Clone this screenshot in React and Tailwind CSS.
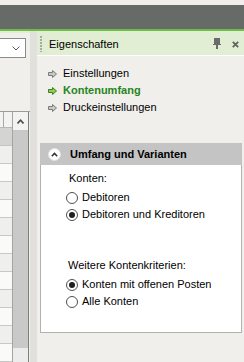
// Eigenschaften-Panel mit Kontenumfang (Screenshot-Nachbau)
function NavArrow({ active }) {
  const fill = active ? '#8fd04f' : '#c8c8c8'
  const stroke = active ? '#3d7d1e' : '#7b7b7b'
  return (
    <svg width="9" height="8" viewBox="0 0 9 8" className="shrink-0">
      <path d="M0.5 2.5H4.5V0.5L8.5 4L4.5 7.5V5.5H0.5Z" fill={fill} stroke={stroke} strokeWidth="1" />
    </svg>
  )
}

function NavItem({ label, active }) {
  return (
    <div className="flex items-center h-[17px] pl-[11px] gap-[6px]">
      <NavArrow active={active} />
      <span className={active ? 'font-bold text-[#27851b]' : 'text-black'}>{label}</span>
    </div>
  )
}

function Radio({ checked, label }) {
  return (
    <div className="flex items-center h-[17px]">
      <span className="w-[12px] h-[12px] rounded-full border border-[#4f4f4f] bg-white grid place-items-center shrink-0">
        {checked && <span className="w-[6px] h-[6px] rounded-full bg-[#1f1f1f]" />}
      </span>
      <span className="ml-[4px]">{label}</span>
    </div>
  )
}

function LeftPanel() {
  const rows = Array.from({ length: 12 }, (_, i) => i + 1)
  return (
    <div className="w-[30px] shrink-0 flex flex-col overflow-hidden">
      <div className="h-[2px] bg-[#e1eed4]" />
      {/* Combobox, links abgeschnitten */}
      <div className="mt-[5px] -ml-px w-[27px] h-[20px] bg-white border border-[#8a8a8a] flex items-center justify-end pr-[5px]">
        <svg width="8" height="5" viewBox="0 0 8 5">
          <path d="M0.5 0.5L4 4L7.5 0.5" fill="none" stroke="#5a5a5a" strokeWidth="1" />
        </svg>
      </div>
      {/* Tabelle mit Scrollbar */}
      <div className="mt-[53px] flex-1 flex border-t border-[#9b9b9b] min-h-0">
        <div className="w-[13px] flex flex-col border-r border-[#a5a5a5]">
          <div className="h-[19px] flex bg-[#f3f3f1] border-b border-[#b8b8b8]">
            <div className="w-[4px] border-r border-[#a8a8a8]" />
            <div className="flex-1" />
          </div>
          <div className="h-[18px] shrink-0 bg-[#d4d4d2] border-b border-[#c4c4c2]" />
          {rows.map((r) => (
            <div
              key={r}
              className={`h-[18px] shrink-0 border-b border-[#c8c8c6] ${r % 2 === 0 ? 'bg-[#fafaf9]' : 'bg-[#efefed]'}`}
            />
          ))}
        </div>
        <div className="w-[15px] flex flex-col">
          <div className="h-[18px] shrink-0 bg-[#f3f3f1] grid place-items-center">
            <svg width="7" height="5" viewBox="0 0 7 5">
              <path d="M0.5 4.5L3.5 1.2L6.5 4.5" fill="none" stroke="#4a4a4a" strokeWidth="1.6" />
            </svg>
          </div>
          <div className="h-[218px] shrink-0 bg-[#c9c9c9]" />
          <div className="flex-1 bg-[#ececec]" />
        </div>
        <div className="w-px bg-[#7e7e7e]" />
      </div>
    </div>
  )
}

export default function App() {
  return (
    <div className="w-[244px] h-[362px] overflow-hidden bg-[#f0efeb] flex flex-col font-['Liberation_Sans',Arial,sans-serif] text-[11px] leading-[17px] text-black">
      <div className="h-[5px] shrink-0 bg-[#f0efeb]" />
      <div className="h-[24px] shrink-0 bg-[#666b68]" />
      <div className="h-[2px] shrink-0 bg-[#6cbf43]" />
      <div className="flex flex-1 min-h-0">
        <LeftPanel />
        <div className="w-[7px] shrink-0 bg-[#e1e0dc]" />
        <div className="flex-1 flex flex-col min-w-0">
          {/* Kopfzeile */}
          <div className="h-[25px] shrink-0 pt-[2px] bg-[#e1eed4] flex items-center pl-[3px] pr-[4px] border-b border-white">
            <div className="w-[2px] h-[16px] bg-[repeating-linear-gradient(to_bottom,#a9a9a9_0px,#a9a9a9_2px,transparent_2px,transparent_3px)]" />
            <span className="ml-[7px] flex-1">Eigenschaften</span>
            <svg width="8" height="11" viewBox="0 0 8 11" className="mr-[11px] mt-[-2px]">
              <rect x="1" y="0" width="6" height="6" fill="#6b6b6b" />
              <rect x="0" y="6" width="8" height="1" fill="#6b6b6b" />
              <rect x="3" y="7" width="2" height="4" fill="#6b6b6b" />
            </svg>
            <svg width="7" height="7" viewBox="0 0 7 7" className="mr-[1px]">
              <path d="M0.8 0.8L6.2 6.2M6.2 0.8L0.8 6.2" stroke="#626262" strokeWidth="1.8" />
            </svg>
          </div>

          {/* Navigation */}
          <div className="pt-[9px] flex flex-col">
            <NavItem label="Einstellungen" />
            <NavItem label="Kontenumfang" active />
            <NavItem label="Druckeinstellungen" />
          </div>

          {/* Gruppe */}
          <div className="mt-[27px] ml-[3px] mr-[2px] flex flex-col">
            <div className="h-[22px] bg-[#c4c4c4] flex items-center pl-[8px]">
              <span className="w-[13px] h-[13px] rounded-full bg-white border border-[#e2e2e2] grid place-items-center">
                <svg width="7" height="5" viewBox="0 0 7 5">
                  <path d="M0.8 4.2L3.5 1.4L6.2 4.2" fill="none" stroke="#333" strokeWidth="1.5" />
                </svg>
              </span>
              <span className="ml-[9px] font-bold">Umfang und Varianten</span>
            </div>
            <div className="bg-white border border-t-0 border-[#b2b2b2] pt-[5px] pb-[22px] pl-[25px]">
              <div className="ml-[3px]">Konten:</div>
              <div className="mt-[2px]">
                <Radio label="Debitoren" />
                <Radio label="Debitoren und Kreditoren" checked />
              </div>
              <div className="mt-[34px] ml-[2px]">Weitere Kontenkriterien:</div>
              <div className="mt-[2px]">
                <Radio label="Konten mit offenen Posten" checked />
                <Radio label="Alle Konten" />
              </div>
            </div>
          </div>
        </div>
      </div>
    </div>
  )
}
